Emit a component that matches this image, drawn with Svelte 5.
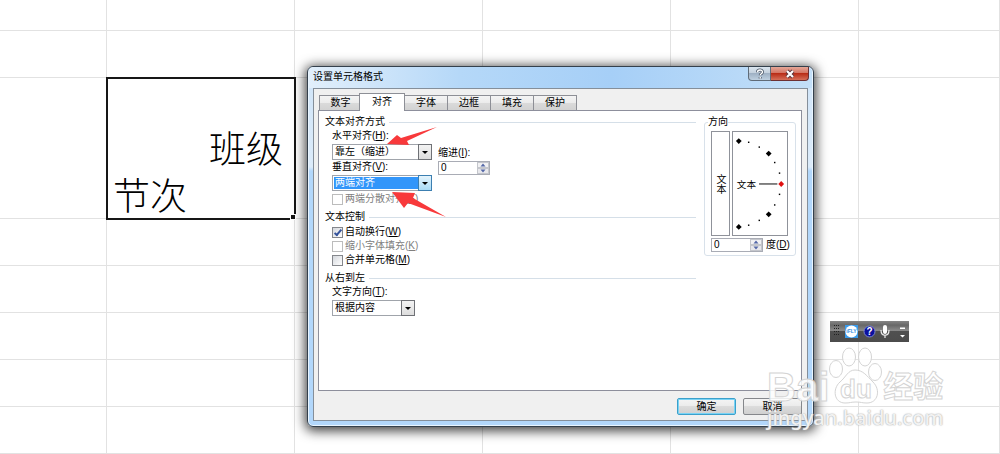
<script lang="ts">
  const tabs = ["数字", "对齐", "字体", "边框", "填充", "保护"]
  let activeTab = $state(1)

  let horizontal = $state("靠左（缩进）")
  let vertical = $state("两端对齐")
  let direction = $state("根据内容")
  let indent = $state("0")
  let degree = $state("0")
  let wrap = $state(true)
  let merge = $state(false)

  const before = [0, 1]
  const after = [3, 4, 5, 6, 7]
  const cols = [0, 1, 2, 3, 4, 5]

  // angle marks of the orientation dial
  const bigMarks = [[6, 8], [37, 21], [37, 84], [6, 97]]
  const smallMarks = [[16, 9], [27, 14], [43, 30], [48, 41], [48, 63], [43, 74], [27, 90], [16, 95]]
</script>

{#snippet plainRow()}
  <tr>
    {#each cols as c (c)}
      <td></td>
    {/each}
  </tr>
{/snippet}

{#snippet spinArrows()}
  <svg class="spin-arrows" viewBox="0 0 12 12" aria-hidden="true">
    <rect x="0.5" y="0.5" width="11" height="5" fill="#f1f1f3" stroke="#c4c6cc" />
    <rect x="0.5" y="6.5" width="11" height="5" fill="#e8e8ec" stroke="#c4c6cc" />
    <path d="M6 1.5 8.5 4.5h-5zM6 10.500 8.500 7.500h-5z" fill="#5468a8" />
  </svg>
{/snippet}

{#snippet picker(id: string, value: string, focused: boolean)}
  <div class="picker" class:focused>
    <select {id}>
      <option>{value}</option>
    </select>
    <span class="drop" aria-hidden="true">
      <svg viewBox="0 0 6 3"><path d="M0 0h6L3 3z" /></svg>
    </span>
  </div>
{/snippet}

<main class="desktop">
  <table class="sheet">
    <colgroup>
      <col class="first" />
      <col class="wide" />
      <col class="wide" />
      <col class="wide" />
      <col class="wide" />
      <col />
    </colgroup>
    <tbody>
      {#each before as r (r)}
        {@render plainRow()}
      {/each}
      <tr class="tall">
        <td></td>
        <td class="selected">
          <div class="right">班级</div>
          <div>节次</div>
          <i class="handle"></i>
        </td>
        <td></td>
        <td></td>
        <td></td>
        <td></td>
      </tr>
      {#each after as r (r)}
        {@render plainRow()}
      {/each}
    </tbody>
  </table>

  <section class="dialog" role="dialog" aria-labelledby="title">
    <header>
      <h1 id="title">设置单元格格式</h1>
      <div class="controls">
        <button class="help" aria-label="帮助">
          <svg viewBox="0 0 12 12" width="12" height="12">
            <path d="M3.500 4.200C3.500 1.300 8.500 1.300 8.500 4c0 1.700-2.300 1.700-2.300 3.300M6.200 9v1.500" fill="none" stroke="#4d5868" stroke-width="3" />
            <path d="M3.500 4.200C3.500 1.300 8.500 1.300 8.500 4c0 1.700-2.300 1.700-2.300 3.300M6.200 9v1.500" fill="none" stroke="#fff" stroke-width="1.400" />
          </svg>
        </button>
        <button class="close" aria-label="关闭">
          <svg viewBox="0 0 12 12" width="12" height="12">
            <path d="m3 3 6 6M9 3 3 9" stroke="#5d3438" stroke-width="4" />
            <path d="m3 3 6 6M9 3 3 9" stroke="#fff" stroke-width="2.200" />
          </svg>
        </button>
      </div>
    </header>

    <div class="client">
      <div class="tab-list" role="tablist">
        {#each tabs as label, index (label)}
          <button class="tab" role="tab" aria-selected={index === activeTab} class:active={index === activeTab} onclick={() => (activeTab = index)}>
            {label}
          </button>
        {/each}
      </div>

      <div class="panel">
        <div class="options">
          <section>
            <h2>文本对齐方式</h2>
            <div class="fields">
              <div class="main-fields">
                <label for="horizontal">水平对齐(<u>H</u>):</label>
                {@render picker("horizontal", horizontal, false)}
                <label for="vertical">垂直对齐(<u>V</u>):</label>
                {@render picker("vertical", vertical, true)}
              </div>
              <div class="indent">
                <label for="indent">缩进(<u>I</u>):</label>
                <div class="spin">
                  <input id="indent" type="text" bind:value={indent} />
                  {@render spinArrows()}
                </div>
              </div>
            </div>
            <label class="check disabled"><input type="checkbox" disabled />两端分散对齐(<u>E</u>)</label>
          </section>

          <section>
            <h2>文本控制</h2>
            <label class="check"><input type="checkbox" bind:checked={wrap} />自动换行(<u>W</u>)</label>
            <label class="check disabled"><input type="checkbox" disabled />缩小字体填充(<u>K</u>)</label>
            <label class="check"><input type="checkbox" bind:checked={merge} />合并单元格(<u>M</u>)</label>
          </section>

          <section>
            <h2>从右到左</h2>
            <div class="direction">
              <label for="direction">文字方向(<u>T</u>):</label>
              {@render picker("direction", direction, false)}
            </div>
          </section>
        </div>

        <fieldset>
          <legend>方向</legend>
          <div class="orientation">
            <button class="upright">文本</button>
            <svg class="dial" viewBox="0 0 56 104">
              <text x="4" y="57">文本</text>
              <path d="M27 52.500h19" stroke="#000" />
              {#each smallMarks as [x, y]}
                <rect x={x - 0.5} y={y - 0.5} width="1.500" height="1.500" />
              {/each}
              {#each bigMarks as [x, y]}
                <path d="M{x} {y - 3}l3 3-3 3-3-3z" />
              {/each}
              <path d="M50 49.500l3 3-3 3-3-3z" fill="#e01010" />
            </svg>
          </div>
          <div class="degree">
            <div class="spin">
              <input id="degree" type="text" bind:value={degree} />
              {@render spinArrows()}
            </div>
            <label for="degree">度(<u>D</u>)</label>
          </div>
        </fieldset>
      </div>

      <footer>
        <button class="action default">确定</button>
        <button class="action">取消</button>
      </footer>
    </div>
  </section>

  <svg class="arrow upper" viewBox="0 0 50 18" aria-hidden="true">
    <path d="M0 17 10 8l4 3L50 0 20 14l2 4z" />
  </svg>
  <svg class="arrow lower" viewBox="0 0 54 26" aria-hidden="true">
    <path d="M0 0 23 1l-2 5 33 19-38-14-4 5z" />
  </svg>

  <div class="ime">
    <svg viewBox="0 0 79 21" width="79" height="21">
      <g fill="#222">
        {#each [4, 7, 10, 13] as y}
          <path d="M4 {y}h1v1H4zM6 {y}h1v1H6zM8 {y}h1v1H8z" />
        {/each}
      </g>
      <rect x="15" y="4" width="13" height="13" fill="#3b9bea" />
      <circle cx="21.500" cy="10.500" r="6" fill="#fff" />
      <text x="21.500" y="12" class="brand">iFLY</text>
      <circle cx="39.500" cy="10.500" r="5.500" fill="#0b109f" stroke="#7e88c9" />
      <text x="39.500" y="14" class="ask">?</text>
      <rect x="53" y="4" width="4" height="9" rx="2" fill="#fff" />
      <path d="M51 9c0 7 8 7 8 0M55 14v3" fill="none" stroke="#eee" stroke-width="1.200" />
      <path d="M70 6.500h5v1.500h-5zM70 14h5l-2.500 2.500z" fill="#fff" />
    </svg>
  </div>

  <div class="watermark" aria-hidden="true">
    <div class="logo">
      <span class="latin">Bai</span>
      <svg viewBox="0 0 54 58">
        <ellipse cx="7" cy="22" rx="6.500" ry="8.500" />
        <ellipse cx="20" cy="10" rx="6.500" ry="9" />
        <ellipse cx="36" cy="10" rx="6.500" ry="9" />
        <ellipse cx="46" cy="25" rx="6.500" ry="8.500" />
        <path d="M26 23c-7 0-9 7-15 12-8 7-6 21 5 21 5 0 6-1 11-1s6 1 11 1c11 0 14-13 6-21-6-6-10-12-18-12z" />
        <text x="27" y="51">du</text>
      </svg>
      <span class="cjk">经验</span>
    </div>
    <div class="domain">jingyan.baidu.com</div>
  </div>
</main>

<style>
  :global(body) {
    margin: 0;
    overflow: hidden;
    background: #fff;
  }

  .desktop,
  button,
  input,
  select {
    font-family: "Liberation Sans", "Noto Sans CJK SC", sans-serif;
    font-size: 10px;
    line-height: 14px;
    color: #000;
  }

  .desktop {
    position: relative;
    min-height: 100vh;
  }

  button,
  input,
  select {
    box-sizing: border-box;
    margin: 0;
    padding: 0;
  }

  h1,
  h2 {
    margin: 0;
    font-size: 10px;
    font-weight: 400;
  }

  u {
    text-underline-offset: 1px;
  }

  /* worksheet */
  .sheet {
    width: 100%;
    table-layout: fixed;
    border-collapse: separate;
    border-spacing: 0;
  }

  .first {
    width: 107px;
  }

  .wide {
    width: 188px;
  }

  .sheet td {
    box-sizing: border-box;
    height: 47px;
    padding: 0;
    border-right: 1px solid #e2e2e2;
    border-bottom: 1px solid #e2e2e2;
  }

  .sheet tr:first-child td {
    height: 31px;
  }

  .sheet .tall td {
    height: 141px;
  }

  .sheet td.selected {
    position: relative;
    padding: 0 11px 0 6px;
    outline: 2px solid #161616;
    outline-offset: -1px;
    font-family: "Noto Sans CJK SC", sans-serif;
    font-size: 37px;
    line-height: 47px;
    font-weight: 300;
    vertical-align: bottom;
  }

  .right {
    text-align: right;
  }

  .handle {
    position: absolute;
    right: -2px;
    bottom: -2px;
    width: 4px;
    height: 4px;
    border: 1px solid #fff;
    background: #161616;
  }

  /* dialog frame */
  .dialog {
    position: absolute;
    top: 66px;
    left: 307px;
    box-sizing: border-box;
    width: 507px;
    padding: 0 5px 5px;
    border: 1px solid #34404c;
    border-radius: 6px;
    background: linear-gradient(#cfe4f8, #dcebfa 100px, #b2d7fb 104px, #b2d7fb);
    box-shadow: inset 0 0 0 1px #e9f5ff, 0 2px 12px 2px rgba(0, 0, 0, 0.75);
  }

  header {
    display: flex;
    justify-content: space-between;
    height: 21px;
    margin: 0 -4px;
    padding: 0 3px 0 4px;
    border-radius: 5px 5px 0 0;
    background: linear-gradient(90deg, #e2effb, #b5d8f8 30%, #a6cff7 60%, #c3dff8);
  }

  header h1 {
    line-height: 20px;
  }

  .controls {
    display: flex;
    height: 14px;
  }

  .controls button {
    display: grid;
    place-items: center;
    border: 1px solid #5f6b78;
    border-top: 0;
  }

  .help {
    width: 23px;
    border-radius: 0 0 0 4px;
    background: linear-gradient(#dce6ef, #c1cedb 50%, #9fb1c4 50%, #bfd0e0);
  }

  .controls .close {
    width: 38px;
    border-left: 0;
    border-color: #6d3033;
    border-radius: 0 0 4px 0;
    background: linear-gradient(#e5a798, #d2705e 50%, #b92d17 50%, #d5705a);
  }

  .client {
    padding: 4px 5px 5px 4px;
    border: 1px solid #858f9a;
    background: #f0f0f0;
  }

  /* tabs */
  .tab-list {
    display: flex;
    align-items: flex-end;
    padding-left: 1px;
  }

  .tab {
    width: 43px;
    height: 15px;
    border: 1px solid #8d8f96;
    border-left-width: 0;
    border-bottom: 0;
    background: linear-gradient(#f4f4f4, #ebebeb 50%, #dadada 50%, #d2d2d2);
  }

  .tab:first-child {
    border-left-width: 1px;
  }

  .tab.active {
    z-index: 1;
    width: 46px;
    height: 18px;
    margin: 0 0 -1px -3px;
    padding-bottom: 1px;
    border-left-width: 1px;
    background: #fff;
  }

  .panel {
    display: flex;
    align-items: flex-start;
    gap: 8px;
    box-sizing: border-box;
    min-height: 281px;
    padding: 4px 6px;
    border: 1px solid #8d8f9c;
    background: #fff;
  }

  .options {
    display: grid;
    flex: 1;
    gap: 4px;
  }

  h2 {
    display: flex;
    align-items: center;
    gap: 4px;
  }

  h2::after {
    content: "";
    flex: 1;
    height: 1px;
    background: #d5dfe8;
  }

  .fields {
    display: flex;
    gap: 6px;
    padding-left: 7px;
  }

  .main-fields {
    width: 100px;
  }

  .indent {
    padding-top: 17px;
  }

  .fields label,
  .direction label {
    display: block;
  }

  .direction {
    width: 83px;
    padding-left: 7px;
  }

  .picker {
    display: grid;
    height: 16px;
    margin-top: 1px;
  }

  .picker select {
    grid-area: 1 / 1;
    width: 100%;
    height: 16px;
    padding: 0 14px 0 2px;
    border: 1px solid #a0a4ab;
    border-radius: 0;
    appearance: none;
    background: #fff;
    line-height: 14px;
  }

  .picker.focused select {
    background: #3296fa;
    box-shadow: inset 0 0 0 1px #fff;
    color: #fff;
  }

  .drop {
    grid-area: 1 / 1;
    display: grid;
    place-items: center;
    justify-self: end;
    box-sizing: border-box;
    width: 14px;
    border: 1px solid #6f7176;
    background: linear-gradient(#f3f3f3, #ddd);
    pointer-events: none;
  }

  .focused .drop {
    border-color: #3c7fb1;
    background: linear-gradient(#e5f4fc, #a9dbf6);
  }

  .drop svg {
    width: 6px;
    height: 3px;
  }

  .spin {
    display: flex;
    align-items: center;
    box-sizing: border-box;
    width: 52px;
    height: 14px;
    margin-top: 1px;
    border: 1px solid #a9acb5;
  }

  .spin input {
    flex: 1;
    min-width: 0;
    height: 12px;
    padding: 0 2px;
    border: 0;
    line-height: 12px;
  }

  .spin-arrows {
    width: 12px;
    height: 12px;
  }

  .check {
    display: flex;
    align-items: center;
    height: 14px;
    margin: 0 0 0 7px;
  }

  h2 + .check,
  .fields + .check {
    margin-top: 1px;
  }

  .check input {
    display: grid;
    place-items: center;
    width: 11px;
    height: 11px;
    margin-right: 2px;
    border: 1px solid #85878c;
    appearance: none;
    background: linear-gradient(135deg, #d5d8dd, #fff);
  }

  .check input:checked::before {
    content: "";
    box-sizing: border-box;
    width: 4px;
    height: 8px;
    border: solid #35539c;
    border-width: 0 2px 2px 0;
    transform: rotate(40deg);
  }

  .check.disabled {
    color: #808080;
  }

  .check.disabled input {
    border-color: #bcbcbc;
    background: #fff;
  }

  /* orientation */
  fieldset {
    box-sizing: border-box;
    width: 92px;
    min-width: 0;
    margin: 0 -1px 0 0;
    padding: 2px 6px 3px;
    border: 1px solid #d8e1ea;
    border-radius: 3px;
  }

  legend {
    margin-left: -3px;
    padding: 0;
  }

  .orientation {
    display: flex;
    gap: 2px;
  }

  .upright {
    width: 19px;
    border: 1px solid #8f929a;
    background: #fff;
    line-height: 17px;
    writing-mode: vertical-rl;
  }

  .dial {
    box-sizing: border-box;
    width: 56px;
    height: 105px;
    border: 1px solid #8f929a;
  }

  .dial text {
    font-size: 10px;
  }

  .degree {
    display: flex;
    align-items: center;
    gap: 3px;
    padding-top: 1px;
    white-space: nowrap;
  }

  footer {
    display: flex;
    justify-content: flex-end;
    gap: 7px;
    padding-top: 7px;
  }

  .action {
    width: 59px;
    height: 17px;
    border: 1px solid #85878b;
    border-radius: 2px;
    background: linear-gradient(#f4f4f4, #ebebeb 50%, #dcdcdc 50%, #d0d0d0);
    line-height: 15px;
  }

  .action.default {
    border-color: #3ba0cb;
    box-shadow: inset 0 0 0 1px #79d3f5;
  }

  /* pointers over the dialog */
  .arrow {
    position: absolute;
    fill: #f8393b;
  }

  .upper {
    top: 127px;
    left: 387px;
    width: 50px;
  }

  .lower {
    top: 192px;
    left: 392px;
    width: 54px;
  }

  .ime {
    position: absolute;
    top: 321px;
    left: 830px;
    display: flex;
    background: linear-gradient(#858585, #686868 20%, #8a8a8a 45%, #505050 50%, #4c4c4c);
  }

  .brand {
    font-size: 5px;
    font-weight: 700;
    text-anchor: middle;
    fill: #2f8fe5;
  }

  .ask {
    font-size: 10px;
    font-weight: 700;
    text-anchor: middle;
    fill: #fff;
  }

  .watermark {
    position: absolute;
    top: 347px;
    left: 767px;
    color: rgba(255, 255, 255, 0.85);
    white-space: nowrap;
  }

  .logo {
    display: flex;
    align-items: flex-end;
    height: 58px;
  }

  .latin,
  .cjk {
    -webkit-text-stroke: 1px #d4d4d4;
  }

  .latin {
    font-size: 40px;
    line-height: 36px;
    font-weight: 700;
  }

  .logo svg {
    width: 54px;
    height: 58px;
    fill: rgba(255, 255, 255, 0.85);
    stroke: #d4d4d4;
  }

  .logo svg text {
    font-size: 26px;
    font-weight: 700;
    text-anchor: middle;
  }

  .cjk {
    font-size: 30px;
    line-height: 36px;
    font-weight: 700;
  }

  .domain {
    font-family: "Noto Sans", sans-serif;
    font-size: 20px;
    line-height: 26px;
    font-weight: 500;
    text-shadow: 0 0 1px #aaa, 0 0 2px #bbb;
  }
</style>
